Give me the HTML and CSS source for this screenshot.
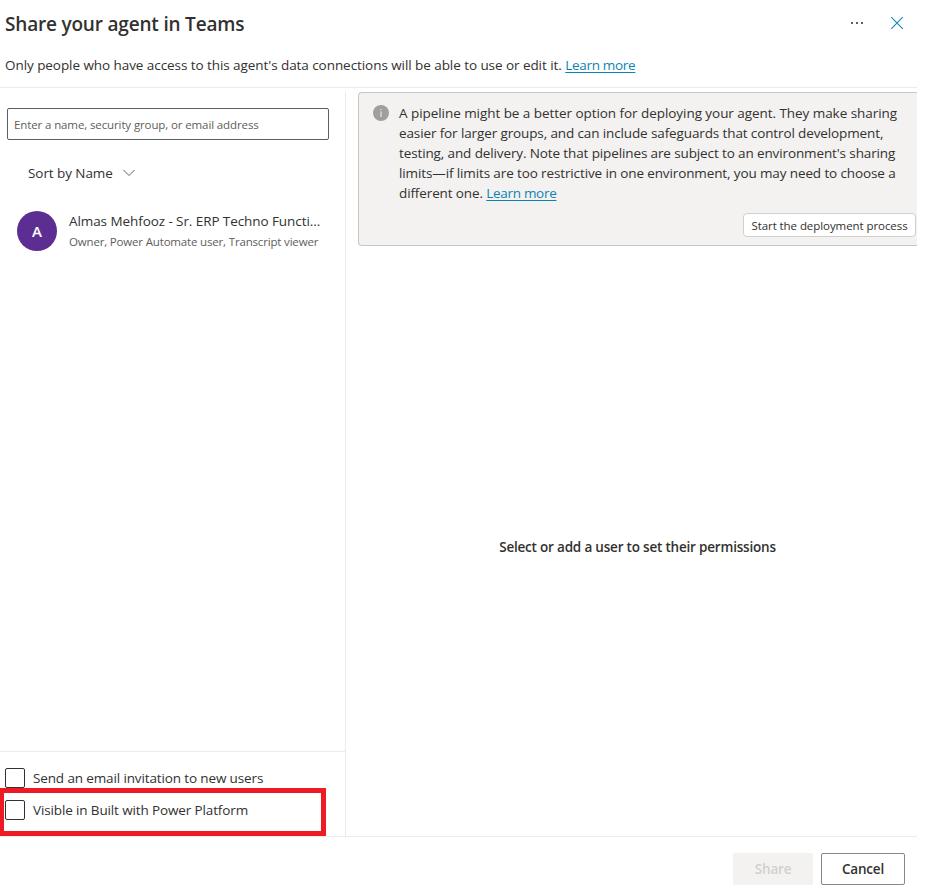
FILE: index.html
```html
<!DOCTYPE html>
<html lang="en">
<head>
<meta charset="utf-8">
<title>Share your agent in Teams</title>
<link rel="stylesheet" href="styles.css">
</head>
<body>
<main class="panel">
  <header class="header">
    <div class="title-row">
      <h1 class="title"><span>Share your agent in Teams</span></h1>
      <div class="header-actions">
        <button class="icon-button" aria-label="More"><svg width="16" height="16" viewBox="0 0 16 16"><path d="M2 7h2v2H2zM7 7h2v2H7zM12 7h2v2h-2z" fill="#605e5c"/></svg></button>
        <button class="icon-button" aria-label="Close"><svg width="16" height="16" viewBox="0 0 16 16"><path d="M2.2 2.2l11.6 11.6M13.8 2.2L2.2 13.8" stroke="#1189b5" stroke-width="1.1" fill="none"/></svg></button>
      </div>
    </div>
    <p class="subtitle"><span class="intro">Only people who have access to this agent's data connections will be able to use or edit it.</span> <a class="link" href="#">Learn more</a></p>
  </header>
  <div class="body">
    <section class="people">
      <input class="search" placeholder="Enter a name, security group, or email address" aria-label="People">
      <button class="sort"><span>Sort by Name</span><svg width="12" height="8" viewBox="0 0 12 8"><path d="M.5 1l5.5 5.500L11.500 1" stroke="#605e5c" fill="none"/></svg></button>
      <div class="person">
        <div class="avatar">A</div>
        <div class="person-text">
          <div class="person-name"><span>Almas Mehfooz - Sr. ERP Techno Functi...</span></div>
          <div class="person-role"><span>Owner, Power Automate user, Transcript viewer</span></div>
        </div>
      </div>
      <div class="options">
        <label class="option"><input class="box" type="checkbox"><span>Send an email invitation to new users</span></label>
        <label class="option"><input class="box" type="checkbox"><span>Visible in Built with Power Platform</span></label>
        <div class="highlight"></div>
      </div>
    </section>
    <section class="details">
      <div class="notice">
        <svg class="info" width="16" height="16" viewBox="0 0 16 16"><circle cx="8" cy="8" r="8" fill="#a19f9d"/><path d="M7.300 4h1.400v1.300H7.300zM7.300 6.500h1.400V12H7.300z" fill="#dddbd9"/></svg>
        <p class="notice-text">
          <span class="first-line">A pipeline might be a better option for deploying your agent. They make sharing</span><br>
          <span>easier for larger groups, and can include safeguards that control development,</span><br>
          <span>testing, and delivery. Note that pipelines are subject to an environment's sharing</span><br>
          <span>limits—if limits are too restrictive in one environment, you may need to choose a</span><br>
          <span>different one.</span> <a class="link" href="#">Learn more</a>
        </p>
        <button class="deploy"><span>Start the deployment process</span></button>
      </div>
      <div class="empty"><span>Select or add a user to set their permissions</span></div>
    </section>
  </div>
  <footer class="footer">
    <button class="button share" disabled>Share</button>
    <button class="button cancel">Cancel</button>
  </footer>
</main>
</body>
</html>
```
FILE: styles.css
```css
* { box-sizing: border-box; }
body {
  margin: 0;
  background: #fff;
  color: #323130;
  font: 13.5px/20px "Open Sans", "Noto Sans", sans-serif;
  overflow: hidden;
}
h1, p { margin: 0; }
button, input { font: inherit; color: inherit; }
button { padding: 0; border: 0; background: none; }
span, .link { white-space: nowrap; }
.panel { width: 917px; height: 896px; display: flex; flex-direction: column; }
.header { height: 88px; border-bottom: 1px solid #edebe9; padding: 7px 4px 0 5px; flex: none; }
.title-row { display: flex; justify-content: space-between; height: 48px; }
.title { font-size: 19px; font-weight: 600; line-height: 34px; letter-spacing: -0.19px; }
.header-actions { display: flex; gap: 8px; }
.icon-button { width: 32px; height: 32px; display: grid; place-items: center; }
.intro { letter-spacing: -0.065px; }
.link { color: #0d84b0; text-decoration: underline; text-underline-offset: 2px; letter-spacing: -0.3px; }
.body { display: flex; height: 748px; flex: none; }
.people {
  width: 346px;
  display: flex;
  flex-direction: column;
  margin-top: 4px;
  border-right: 1px solid #edebe9;
}
.search {
  width: 322px;
  height: 32px;
  margin: 16px 0 0 7px;
  padding: 0 6px;
  border: 1px solid #605e5c;
  border-radius: 2px;
  font-size: 11.5px;
  letter-spacing: -0.115px;
}
.search::placeholder { color: #605e5c; opacity: 1; }
.sort { display: flex; align-items: center; gap: 10px; height: 20px; margin: 23px 0 0 28px; letter-spacing: -0.07px; }
.person { display: flex; gap: 12px; margin: 28px 0 0 17px; }
.avatar {
  width: 40px;
  height: 40px;
  border-radius: 50%;
  background: #5c2e91;
  color: #fff;
  font-size: 15px;
  font-weight: 600;
  display: grid;
  place-items: center;
}
.person-name { letter-spacing: -0.08px; }
.person-role { margin-top: 1px; font-size: 11.5px; color: #605e5c; letter-spacing: -0.17px; }
.options {
  position: relative;
  height: 85px;
  margin-top: auto;
  border-top: 1px solid #edebe9;
  padding: 16px 0 0 5px;
  display: flex;
  flex-direction: column;
  gap: 12px;
  letter-spacing: -0.13px;
}
.option { display: flex; align-items: center; height: 20px; gap: 8px; }
.box { appearance: none; width: 20px; height: 20px; margin: 0; border: 1px solid #323130; border-radius: 2px; background: #fff; }
.highlight { position: absolute; left: 0; top: 36px; width: 326px; height: 48px; border: 5px solid #ed1c24; border-left-width: 4px; }
.details { flex: 1; min-width: 0; display: flex; flex-direction: column; padding-left: 12px; }
.notice {
  height: 154px;
  margin-top: 4px;
  padding: 10px 1px 0 14px;
  border: 1px solid #c8c6c4;
  border-right: 0;
  border-radius: 4px 0 0 4px;
  background: #f3f2f1;
  display: grid;
  grid-template-columns: 16px 1fr;
  grid-template-rows: 110px 24px;
  column-gap: 10px;
}
.info { margin-top: 2px; }
.notice-text { letter-spacing: -0.12px; }
.first-line { letter-spacing: -0.055px; }
.deploy {
  grid-column: 1 / -1;
  justify-self: end;
  width: 173px;
  height: 24px;
  padding-top: 1px;
  background: #fff;
  border: 1px solid #d2d0ce;
  border-radius: 4px;
  font-size: 11.5px;
  letter-spacing: -0.07px;
}
.empty { flex: 1; display: flex; justify-content: center; padding-top: 291px; font-weight: 600; letter-spacing: -0.2px; }
.footer { flex: 1; border-top: 1px solid #edebe9; display: flex; justify-content: flex-end; gap: 8px; padding: 16px 12px 0 0; }
.button { height: 32px; border-radius: 2px; font-weight: 600; letter-spacing: -0.2px; }
.share { width: 80px; background: #f3f2f1; color: #d2d0ce; }
.cancel { width: 84px; border: 1px solid #8a8886; }
```
